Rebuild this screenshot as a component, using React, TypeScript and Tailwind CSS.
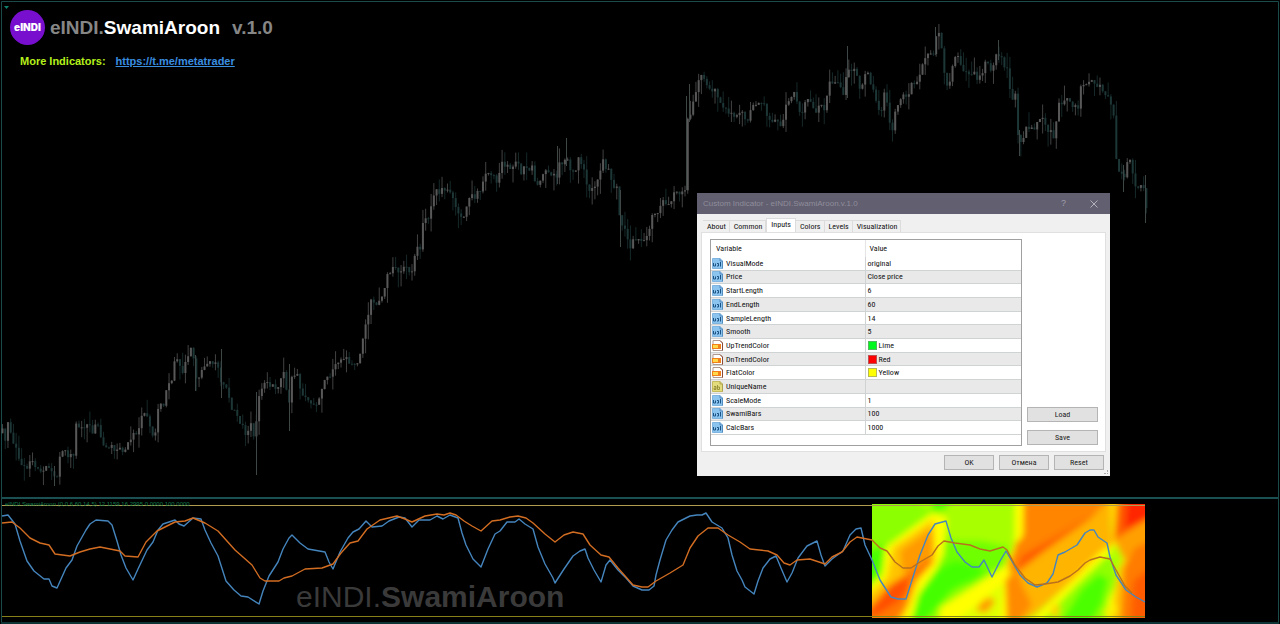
import { useState } from "react";

type Point = [number, number];

const BAR_STEP = 2.73;

// Close prices along the chart, as [x, y]
const CLOSES: Point[] = [
  [2, 432], [5, 443], [8, 415], [11, 437], [15, 445], [20, 465], [25, 469], [28, 472], [31, 455], [34, 468],
  [40, 470], [45, 466], [52, 470], [56, 480], [58, 463], [61, 452], [67, 454], [73, 455], [76, 423], [79, 429],
  [85, 425], [90, 427], [93, 434], [96, 420], [102, 449], [106, 446], [113, 449], [118, 447], [124, 452],
  [128, 441], [133, 434], [139, 430], [142, 411], [147, 418], [150, 432], [155, 434], [158, 402], [163, 406],
  [167, 380], [171, 383], [173, 360], [179, 362], [182, 370], [190, 350], [193, 359], [195, 376], [199, 381],
  [202, 366], [206, 362], [213, 362], [217, 362], [221, 382], [226, 390], [233, 412], [240, 421], [246, 437],
  [250, 423], [254, 442], [257, 405], [261, 391], [265, 382], [270, 389], [273, 381], [277, 393], [280, 379],
  [284, 369], [288, 409], [292, 372], [297, 375], [300, 390], [305, 399], [310, 403], [316, 405], [320, 397],
  [323, 378], [328, 380], [331, 375], [336, 364], [345, 358], [350, 366], [356, 364], [360, 355], [362, 338],
  [366, 322], [370, 300], [375, 301], [378, 306], [382, 296], [387, 277], [390, 274], [395, 265], [400, 274],
  [403, 266], [411, 270], [416, 249], [420, 252], [423, 218], [427, 220], [431, 208], [434, 196], [437, 190],
  [443, 192], [449, 187], [452, 200], [457, 212], [460, 215], [464, 214], [468, 195], [474, 198], [480, 190],
  [484, 174], [488, 171], [491, 175], [497, 182], [501, 164], [506, 163], [511, 170], [516, 158], [521, 172],
  [525, 167], [532, 168], [535, 181], [539, 184], [545, 173], [552, 172], [556, 178], [558, 160], [562, 168],
  [566, 155], [570, 170], [575, 170], [578, 158], [583, 168], [588, 190], [593, 188], [598, 175], [603, 161],
  [608, 172], [613, 186], [616, 187], [619, 216], [624, 230], [630, 250], [633, 237], [637, 239], [641, 242],
  [646, 234], [650, 228], [652, 217], [657, 217], [660, 206], [665, 201], [668, 205], [672, 197], [678, 191],
  [685, 191], [687, 120], [690, 112], [694, 98], [697, 80], [702, 75], [706, 85], [709, 92], [714, 87],
  [718, 99], [722, 105], [728, 115], [738, 115], [742, 115], [746, 122], [750, 112], [753, 102], [758, 102],
  [763, 105], [768, 118], [775, 120], [779, 119], [781, 135], [784, 107], [788, 100], [793, 92], [797, 100],
  [801, 116], [805, 102], [810, 101], [814, 116], [820, 104], [825, 108], [828, 85], [833, 82], [838, 82],
  [843, 92], [847, 72], [852, 68], [855, 72], [860, 90], [864, 75], [868, 75], [873, 90], [878, 112],
  [882, 107], [884, 87], [888, 115], [892, 130], [895, 110], [900, 98], [906, 97], [910, 97], [912, 70],
  [915, 88], [919, 75], [924, 60], [929, 49], [933, 55], [936, 31], [940, 33], [943, 66], [946, 88], [949, 87],
  [953, 60], [958, 54], [961, 73], [965, 73], [973, 73], [978, 80], [982, 75], [985, 60], [990, 68], [995, 58],
  [999, 55], [1003, 63], [1008, 75], [1011, 100], [1015, 96], [1017, 130], [1021, 142], [1026, 128],
  [1033, 130], [1037, 122], [1042, 114], [1047, 128], [1053, 138], [1058, 106], [1063, 102], [1068, 100],
  [1073, 110], [1078, 105], [1080, 88], [1085, 85], [1092, 80], [1098, 86], [1105, 92], [1110, 102],
  [1114, 120], [1116, 165], [1120, 173], [1124, 174], [1127, 160], [1131, 163], [1134, 186], [1138, 190],
  [1142, 178], [1146, 208],
];

// Long shadows that stand out from the rest: [x, top, bottom]
const SPIKES: [number, number, number][] = [
  [256, 392, 475], [54, 466, 486], [289, 364, 431], [221, 349, 398], [195, 355, 391], [557, 146, 184],
  [566, 138, 166], [686, 96, 190], [689, 84, 122], [847, 46, 98], [935, 27, 55], [998, 40, 60],
  [1019, 130, 156], [1145, 175, 223], [1123, 165, 192], [620, 190, 247],
];

const FAST_LINE =
  "2,516 8,515 15,524 20,541 27,561 34,571 44,579 49,579 52,586 57,588 66,568 72,560 77,546 86,530 90,524 96,520 108,521 112,525 117,541 121,555 126,568 133,580 138,569 147,550 153,542 158,530 163,524 175,520 179,524 184,526 193,518 201,519 205,530 211,543 218,556 226,581 234,590 241,596 248,597 259,604 263,591 269,576 278,562 283,549 289,538 292,535 300,543 308,549 325,552 329,562 333,569 340,552 348,538 353,532 359,529 366,521 372,527 382,526 389,521 399,517 405,518 412,527 419,520 430,520 437,516 443,519 450,515 458,518 462,533 466,545 473,559 481,567 488,549 495,534 500,531 507,522 515,522 519,519 525,524 533,529 538,547 545,564 553,578 555,583 564,569 573,556 580,551 585,549 588,558 594,570 601,582 606,565 610,560 618,570 626,578 633,586 642,590 649,590 654,586 656,575 660,560 666,540 672,530 678,522 690,516 697,515 702,515 706,513 712,522 722,528 728,538 732,555 737,571 742,580 745,587 754,594 758,581 763,568 770,559 776,556 781,568 787,582 792,573 798,558 807,546 817,541 821,555 825,566 832,559 843,551 850,535 856,529 861,528 865,545 872,560 880,580 891,597 898,599 906,599 912,580 920,555 928,535 935,524 946,521 951,538 957,552 965,562 972,567 979,567 984,560 992,577 1000,561 1006,551 1013,563 1020,575 1028,583 1037,587 1047,583 1053,574 1058,555 1065,552 1077,545 1085,533 1090,530 1094,530 1098,537 1107,543 1110,557 1116,575 1126,590 1136,597 1145,602";

const SLOW_LINE =
  "2,523 12,522 20,528 30,538 40,543 49,545 55,554 70,556 80,552 90,549 100,547 110,549 120,551 125,556 138,557 146,542 157,531 175,522 185,521 193,518 205,523 218,531 235,550 252,565 260,578 265,581 279,581 284,578 292,576 305,569 322,568 333,564 341,553 350,543 358,541 367,529 380,520 397,516 405,519 412,522 425,516 437,514 444,515 450,513 456,515 464,521 472,526 481,531 492,521 500,520 510,517 518,516 526,518 533,523 545,534 555,542 564,535 573,532 583,534 590,545 601,555 609,557 618,568 633,585 642,587 648,587 656,581 670,573 683,565 690,548 698,536 708,528 718,528 728,535 740,542 750,549 768,551 777,555 784,563 790,565 797,560 810,559 825,564 832,557 842,552 850,542 857,537 872,540";

const SLOW_LINE_TAIL =
  "872,540 880,548 887,551 895,562 903,568 911,568 920,562 932,555 938,546 944,541 955,543 970,545 980,549 990,551 1003,547 1007,550 1015,565 1025,578 1035,585 1045,584 1058,582 1070,576 1078,570 1085,563 1090,560 1100,557 1110,559 1116,570 1125,586 1132,593";

// Swami heat map zones, back to front, on an 820 x 341 field
const ZONES: [string, string][] = [
  ["#8cff00", "-40,-40 860,-40 860,380 -40,380"],
  ["#a8ff00", "120,-20 450,-20 450,130 400,150 240,110 200,40"],
  ["#50ff00", "180,-20 250,-20 215,20 180,24"],
  ["#48ff00", "-30,150 40,120 50,180 -30,260"],
  ["#70ff00", "200,110 330,110 420,130 400,180 300,240 200,250"],
  ["#44ff00", "170,210 250,170 330,190 330,210 240,260 160,350 115,350 140,250"],
  ["#ffff00", "40,130 180,28 225,40 215,150 190,200 140,270 120,341 100,360 -20,360 -20,255 30,215"],
  ["#ffc400", "62,130 185,45 190,160 140,220 115,300 85,360 -20,360 -20,280 45,220"],
  ["#ff9a00", "85,140 180,72 184,150 130,215 90,200"],
  ["#ff7800", "-20,320 50,245 130,190 180,160 185,175 125,240 100,310 70,355 -20,350"],
  ["#ff5000", "-10,325 60,240 110,215 105,262 75,295 10,335"],
  ["#ffff00", "205,310 330,230 400,185 430,200 410,240 350,290 250,360 200,350"],
  ["#e0ff00", "250,350 330,290 400,230 415,260 400,350"],
  ["#ff9c00", "310,320 330,290 355,278 370,292 345,325"],
  ["#ffff00", "430,-20 480,-20 470,110 440,220 460,360 385,360 400,180 428,120"],
  ["#ffb400", "455,-20 740,-20 715,50 725,130 700,150 600,230 490,330 440,360 405,360 418,240 404,170 450,110"],
  ["#ff8400", "455,-20 725,-20 650,45 550,115 445,200 415,200 430,120 460,90"],
  ["#ff5a00", "430,200 450,155 540,105 680,25 640,55 550,118 450,190"],
  ["#ff8a00", "400,225 440,200 450,240 480,300 440,360 405,360"],
  ["#ffff00", "465,360 590,240 690,140 735,115 770,150 755,250 735,360"],
  ["#90ff00", "490,370 610,245 705,155 735,160 738,230 710,290 705,370"],
  ["#4cff00", "560,365 630,255 680,210 710,225 690,300 650,365"],
  ["#ffd000", "535,330 545,300 565,305 558,345"],
  ["#ffd800", "712,-20 760,-20 750,110 722,120"],
  ["#ff5a00", "738,-20 860,-20 860,30 728,108"],
  ["#ff2800", "765,-20 860,-20 860,30 760,75"],
  ["#ffa000", "728,108 860,25 860,160 770,200 742,140"],
  ["#b0ff00", "712,135 735,125 755,165 735,215"],
  ["#ffc000", "740,190 765,160 800,160 790,370 715,370"],
  ["#ff7c00", "757,190 790,130 860,100 860,380 745,380"],
  ["#ff5c00", "785,230 860,170 860,380 775,380"],
  ["#fff000", "700,315 735,300 735,330 695,335"],
];

const TABS = ["About", "Common", "Inputs", "Colors", "Levels", "Visualization"];

interface InputRow {
  name: string;
  value: string;
  kind: "num" | "color" | "text";
  swatch?: string;
}

const ROWS: InputRow[] = [
  { name: "VisualMode", value: "original", kind: "num" },
  { name: "Price", value: "Close price", kind: "num" },
  { name: "StartLength", value: "6", kind: "num" },
  { name: "EndLength", value: "60", kind: "num" },
  { name: "SampleLength", value: "14", kind: "num" },
  { name: "Smooth", value: "5", kind: "num" },
  { name: "UpTrendColor", value: "Lime", kind: "color", swatch: "bg-[#00f81c]" },
  { name: "DnTrendColor", value: "Red", kind: "color", swatch: "bg-[#ff0000]" },
  { name: "FlatColor", value: "Yellow", kind: "color", swatch: "bg-[#ffff00]" },
  { name: "UniqueName", value: "", kind: "text" },
  { name: "ScaleMode", value: "1", kind: "num" },
  { name: "SwamiBars", value: "100", kind: "num" },
  { name: "CalcBars", value: "1000", kind: "num" },
];

function closeAt(x: number) {
  const i = CLOSES.findIndex((p) => p[0] >= x);
  if (i <= 0) return CLOSES[0][1];
  const [x0, y0] = CLOSES[i - 1];
  const [x1, y1] = CLOSES[i];
  return y0 + ((x - x0) / (x1 - x0)) * (y1 - y0);
}

function noise(n: number) {
  const v = Math.sin(n * 127.1) * 43758.5453;
  return v - Math.floor(v);
}

function Candles() {
  const bars = Array.from({ length: 420 }, (_, i) => {
    const x = 2 + i * BAR_STEP;
    const open = closeAt(x - BAR_STEP) + (noise(i - 1) - 0.5) * 7;
    const close = closeAt(x) + (noise(i) - 0.5) * 7;
    const top = Math.min(open, close);
    const bottom = Math.max(open, close);
    return {
      x,
      top,
      bottom,
      high: top - noise(i + 500) ** 2 * 15,
      low: bottom + noise(i + 900) ** 2 * 15,
      up: close < open,
    };
  });
  return (
    <g>
      {bars.map((b) => (
        <g key={b.x} fill={b.up ? "#585858" : "#1d3636"}>
          <rect x={b.x} y={b.high} width={1} height={b.low - b.high} opacity={0.75} />
          <rect x={b.x - 0.5} y={b.top} width={2} height={Math.max(1, b.bottom - b.top)} />
        </g>
      ))}
      {SPIKES.map(([x, top, bottom]) => (
        <rect key={x} x={x} y={top} width={1} height={bottom - top} fill="#3f4646" />
      ))}
    </g>
  );
}

function HeatMap() {
  return (
    <svg x={872} y={504} width={273} height={114} viewBox="0 0 820 341" preserveAspectRatio="none">
      <defs>
        <filter id="soften" x="-10%" y="-10%" width="120%" height="120%">
          <feGaussianBlur stdDeviation="9" />
        </filter>
      </defs>
      <g filter="url(#soften)">
        {ZONES.map(([color, points]) => (
          <polygon key={color + points} fill={color} points={points} />
        ))}
      </g>
    </svg>
  );
}

function TypeIcon({ kind }: { kind: InputRow["kind"] }) {
  if (kind === "color") {
    return (
      <svg viewBox="0 0 11 11" className="h-[11px] w-[11px]" aria-hidden="true">
        <path d="M1 .5h7l2.5 2.5v7.5H1z" fill="#fff" stroke="#b09a90" />
        <path d="M8 .5 10.5 3v7.5" fill="none" stroke="#8a4a3a" />
        <rect x="0" y="4" width="9" height="5" fill="#f2801b" />
        <rect x="1" y="5" width="5" height="3" fill="#ffd94a" />
      </svg>
    );
  }
  const text = kind === "text";
  return (
    <svg viewBox="0 0 11 11" className="h-[11px] w-[11px]" aria-hidden="true">
      <path d="M.5.5H8L10.5 3v7.5H.5z" fill={text ? "#e3dc7c" : "#8cc4f0"} stroke={text ? "#c5bb5c" : "#7db4e0"} />
      <path d="M8 .5V3h2.5v7.5" fill="none" stroke={text ? "#a59b4c" : "#4b82b5"} strokeWidth=".8" />
      {text ? (
        <path d="M2 5.500h2v3H2V7h2M5.500 4v4.500h2V6h-2" fill="none" stroke="#8c8430" strokeWidth=".8" />
      ) : (
        <path d="M1.500 5v3h2V5.500M5 5.500h1.500M5 8h1.500V5.500M8.500 4v4.500" fill="none" stroke="#1d5488" />
      )}
    </svg>
  );
}

function DialogButton({ label, wide = false }: { label: string; wide?: boolean }) {
  return (
    <button
      type="button"
      className={`flex h-[15px] items-center justify-center border border-[#b4b4b4] bg-[#e1e1e1] text-[#222] hover:bg-[#e5f1fb] ${
        wide ? "w-full" : "w-[50px]"
      }`}
    >
      {label}
    </button>
  );
}

function IndicatorDialog() {
  const [tab, setTab] = useState("Inputs");
  return (
    <div
      role="dialog"
      aria-labelledby="dialog-title"
      className="absolute left-[697px] top-[193px] w-[413px] bg-[#f0f0f0] font-['Roboto_Condensed','Liberation_Sans',sans-serif] text-[8px] leading-[11px] text-[#111]"
    >
      {/* Title bar */}
      <div className="flex h-[21px] items-center bg-[#625f70] pl-1.5 pr-3 font-['Liberation_Sans',sans-serif] text-[8px] text-[#8f8d9b]">
        <h2 id="dialog-title" className="flex-1">
          Custom Indicator - eINDI.SwamiAroon.v.1.0
        </h2>
        <button type="button" aria-label="Help" className="mr-6 text-[9px] text-[#a19fac]">
          ?
        </button>
        <button type="button" aria-label="Close" className="text-[#b3b1bc]">
          <svg viewBox="0 0 8 8" className="h-2 w-2" stroke="currentColor" fill="none">
            <path d="M.5.5l7 7M7.500.5l-7 7" />
          </svg>
        </button>
      </div>
      {/* Tabs */}
      <div role="tablist" className="flex h-[18px] items-end pl-1.5">
        {TABS.map((name) => (
          <button
            key={name}
            type="button"
            role="tab"
            aria-selected={tab === name}
            onClick={() => setTab(name)}
            className={
              tab === name
                ? "h-[14px] border border-b-0 border-[#dcdcdc] bg-white px-1 pb-0.5"
                : "h-3 border-r border-t border-[#dcdcdc] pl-1 pr-[3px]"
            }
          >
            {name}
          </button>
        ))}
      </div>
      <div className="mx-1 flex h-[220px] border border-[#e0e0e0] bg-white py-1.5 pl-2 pr-[7px]">
        <div className="h-[207px] w-[312px] border border-[#a0a0a0]">
          <table className="w-full table-fixed border-collapse text-left">
            <thead>
              <tr className="h-[17px]">
                <th className="w-[154px] border-r border-[#e5e5e5] py-0 pl-[5px] font-normal">Variable</th>
                <th className="py-0 pl-1 font-normal">Value</th>
              </tr>
            </thead>
          </table>
          <table aria-label="Indicator inputs" className="h-[178px] w-full table-fixed border-collapse text-left">
            <tbody>
              {ROWS.map((row) => (
                <tr key={row.name} className="border-b border-[#d0d3d3] even:bg-[#e9e9e9]">
                  <td className="w-[154px] border-r border-[#d0d3d3] p-0">
                    <div className="flex items-center gap-[3px] pl-px">
                      <TypeIcon kind={row.kind} />
                      {row.name}
                    </div>
                  </td>
                  <td className="p-0">
                    <div className="flex items-center gap-0.5 pl-0.5">
                      {row.swatch && <span className={`h-[9px] w-[9px] border border-[#8a8a8a]/60 ${row.swatch}`} />}
                      {row.value}
                    </div>
                  </td>
                </tr>
              ))}
            </tbody>
          </table>
        </div>
        <div className="flex flex-1 flex-col justify-end gap-2 pl-[5px]">
          <DialogButton label="Load" wide />
          <DialogButton label="Save" wide />
        </div>
      </div>
      <div className="flex h-6 items-start justify-end gap-[5px] pr-1.5 pt-[3px]">
        <DialogButton label="OK" />
        <DialogButton label="Отмена" />
        <DialogButton label="Reset" />
      </div>
      <span
        aria-hidden="true"
        className="absolute bottom-0.5 right-0.5 h-1 w-1 border-b border-r border-dotted border-[#a8a8a8]"
      />
    </div>
  );
}

export default function App() {
  return (
    <main className="relative min-h-screen overflow-hidden bg-black font-['Liberation_Sans',sans-serif]">
      {/* Price chart */}
      <section className="relative" aria-label="Price chart">
        <svg viewBox="0 0 1280 497" className="block h-auto w-full" aria-hidden="true">
          <path d="M1.500 497V1.500H1278.500V497" fill="none" stroke="#1b4a4b" />
          <path d="M4 6h5L6.500 9z" fill="#11806f" />
          <Candles />
        </svg>
        <header className="absolute left-2.5 top-2.5">
          <div className="flex items-center gap-[5px]">
            <span className="flex h-[35px] w-[35px] items-center justify-center rounded-full bg-[#780fce] font-['Inter',sans-serif] text-[10px] font-black text-white">
              eINDI
            </span>
            <h1 className="flex text-[19px] font-bold leading-6 text-[#868686]">
              eINDI.<span className="text-white">SwamiAroon</span>
              <span className="ml-3">v.1.0</span>
            </h1>
          </div>
          <p className="ml-2.5 mt-2 text-[11px] font-bold leading-4 text-[#b5f01b]">
            More Indicators:
            <a href="https://t.me/metatrader" className="ml-2.5 text-[#3a8ee0] underline">
              https://t.me/metatrader
            </a>
          </p>
        </header>
      </section>

      {/* Oscillator window */}
      <section className="relative" aria-label="eINDI.SwamiAroon">
        <p className="absolute left-[296px] top-[82px] text-[30px] leading-9 text-[#3a3a3a]">
          eINDI.<b>SwamiAroon</b>
        </p>
        <svg viewBox="0 497 1280 127" className="relative block h-auto w-full" aria-hidden="true">
          <rect x={1} y={497} width={1278} height={2} fill="#1a5052" />
          <path d="M1.500 497v126M1278.500 497v126" stroke="#1b4a4b" />
          <rect x={1} y={622} width={1278} height={2} fill="#0f3436" />
          <HeatMap />
          <rect x={2} y={505} width={1143} height={1} fill="#b09c50" />
          <rect x={2} y={616} width={1143} height={1} fill="#85801a" />
          <g fill="none" strokeWidth={1.4} strokeLinejoin="round">
            <polyline points={FAST_LINE} stroke="#4585bd" />
            <polyline points={SLOW_LINE} stroke="#d26d22" />
            <polyline points={SLOW_LINE_TAIL} stroke="#b9701c" />
          </g>
        </svg>
        <p className="absolute left-[5px] top-1 text-[6px] leading-[7px] text-[#0f7d4c]">
          eINDI.SwamiAroon (0,0,6,60,14,5) 12.1159 16.2995 0.0000 100.0000
        </p>
      </section>

      <IndicatorDialog />
    </main>
  );
}
